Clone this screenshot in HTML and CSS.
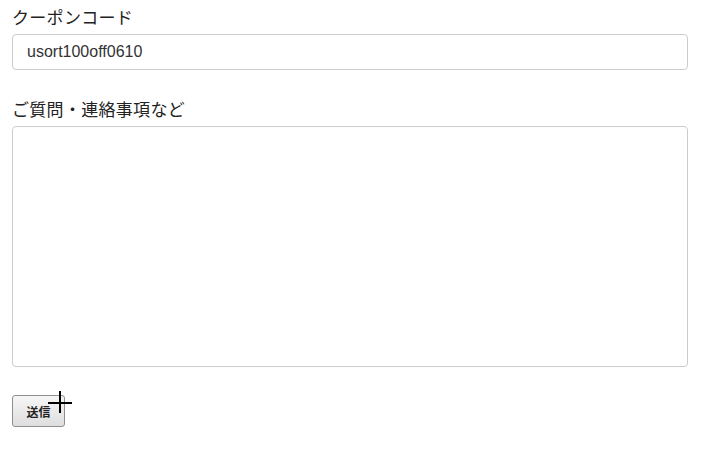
FILE: index.html
```html
<!DOCTYPE html>
<html lang="ja">
<head>
    <meta charset="UTF-8">
    <title>お問い合わせ</title>
    <link rel="stylesheet" href="styles.css">
</head>
<body>
    <form class="form">
        <div class="group">
            <label for="coupon">クーポンコード</label>
            <input type="text" id="coupon" value="usort100off0610">
        </div>
        <div class="group group-note">
            <label for="note">ご質問・連絡事項など</label>
            <textarea id="note"></textarea>
        </div>
        <button type="button" class="submit">送信</button>
    </form>
    <div class="cursor"></div>
</body>
</html>
```

FILE: styles.css
```css
body {
    margin: 0;
    padding: 0;
    font-family: 'Liberation Sans', 'Noto Sans CJK JP', sans-serif;
    color: #222;
    background: #fff;
}
.form {
    padding: 8px 21px 0 12px;
}
.group {
    display: flex;
    flex-direction: column;
}
.group label {
    font-size: 17px;
    letter-spacing: 0.3px;
    line-height: 22px;
    margin-bottom: 4px;
}
.group-note {
    margin-top: 30px;
}
input, textarea {
    box-sizing: border-box;
    width: 100%;
    border: 1px solid #ccc;
    border-radius: 4px;
    font-family: 'Liberation Sans', 'Noto Sans CJK JP', sans-serif;
    font-size: 16px;
    color: #333;
    background: #fff;
}
input {
    height: 36px;
    padding: 0 14px;
}
textarea {
    height: 241px;
    resize: none;
    padding: 6px 14px;
}
.submit {
    margin-top: 28px;
    width: 53px;
    height: 32px;
    padding: 0;
    font-family: 'Noto Sans CJK JP', sans-serif;
    font-size: 12px;
    font-weight: bold;
    color: #222;
    background: linear-gradient(#f6f6f6, #dedede);
    border: 1px solid #8f8f8f;
    border-radius: 3px;
}
.cursor {
    position: absolute;
    left: 48px;
    top: 391px;
    width: 24px;
    height: 22px;
}
.cursor::before, .cursor::after {
    content: '';
    position: absolute;
    background: #000;
}
.cursor::before {
    left: 11px;
    top: 0;
    width: 2px;
    height: 22px;
}
.cursor::after {
    left: 0;
    top: 11px;
    width: 24px;
    height: 2px;
}
```
